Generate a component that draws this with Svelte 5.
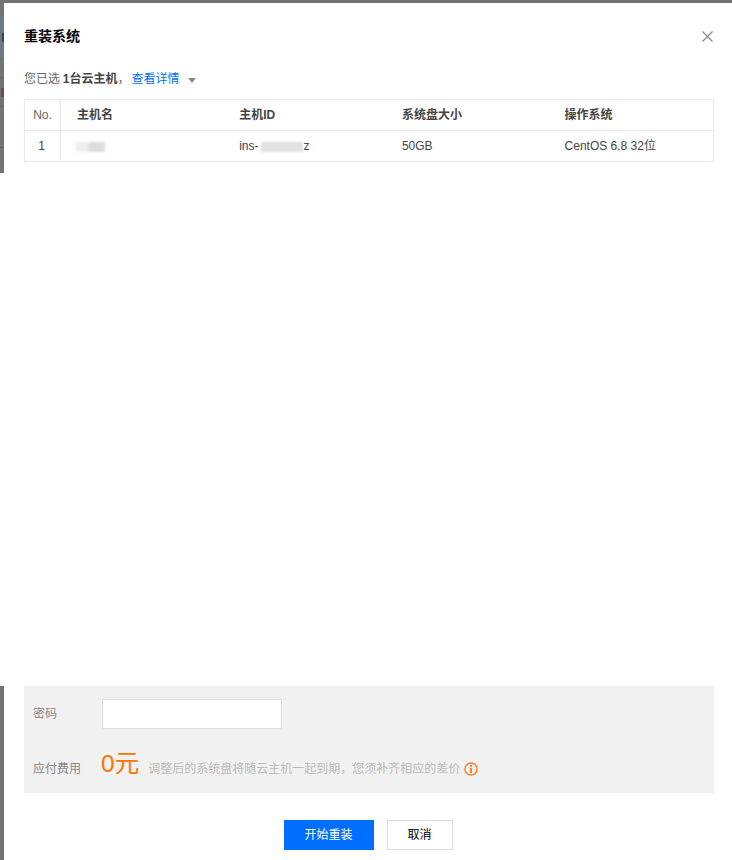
<script>
  const columns = ['主机名', '主机ID', '系统盘大小', '操作系统'];
</script>

<div class="backdrop">
  <div class="strip top"></div>
  <div class="strip side-a">
    <span class="mark m1"></span><span class="mark glyph"></span><span class="mark m2"></span><span class="mark tint"></span><span class="mark m3"></span><span class="mark m4"></span>
  </div>
  <div class="strip side-b"></div>
</div>

<main class="modal">
  <header class="head">
    <h1>重装系统</h1>
    <svg class="close" viewBox="0 0 11 11" width="11" height="11" aria-label="关闭"><path d="M.5.5l10 10M10.5.5l-10 10" /></svg>
  </header>

  <p class="summary">
    <span>您已选 <b>1台云主机</b>，</span><a href="#detail">查看详情</a><i class="caret"></i>
  </p>

  <table>
    <thead>
      <tr>
        <th class="no">No.</th>
        {#each columns as c}<th>{c}</th>{/each}
      </tr>
    </thead>
    <tbody>
      <tr>
        <td class="no">1</td>
        <td><span class="blur b1"></span></td>
        <td>ins-<span class="blur b2"></span>z</td>
        <td>50GB</td>
        <td>CentOS 6.8 32位</td>
      </tr>
    </tbody>
  </table>

  <div class="spacer"></div>

  <section class="form">
    <div class="row pw">
      <span class="label">密码</span>
      <input type="password" aria-label="密码" />
    </div>
    <div class="row fee">
      <span class="label">应付费用</span>
      <span class="price">0元</span>
      <span class="hint">调整后的系统盘将随云主机一起到期，您须补齐相应的差价</span>
      <svg class="info" viewBox="0 0 14 14" width="14" height="14" aria-hidden="true">
        <circle cx="7" cy="7" r="6.1" />
        <rect x="6" y="2.8" width="2" height="2" />
        <rect x="6" y="5.8" width="2" height="5.4" />
      </svg>
    </div>
  </section>

  <footer class="actions">
    <button class="primary">开始重装</button>
    <button class="plain">取消</button>
  </footer>
</main>

<style>
  :global(body) {
    margin: 0;
    background: #fff;
  }
  .backdrop {
    position: absolute;
    inset: 0;
    width: 732px;
    height: 860px;
    overflow: hidden;
  }
  .strip {
    position: absolute;
    background: #737373;
  }
  .top { left: 0; top: 0; width: 732px; height: 3px; }
  .side-a { left: 0; top: 0; width: 4px; height: 173px; }
  .side-b { left: 0; top: 686px; width: 4px; height: 174px; }
  .mark { position: absolute; left: 0; width: 4px; height: 1px; background: #666; }
  .m1 {
    top: 17px;
    height: 40px;
    box-sizing: border-box;
    background: #6e7880;
    border-block: 1px solid #5f7fa0;
  }
  .glyph { top: 33px; height: 9px; left: 2px; width: 2px; background: #444; }
  .tint { top: 88px; height: 9px; left: 1px; width: 3px; background: #6a4a6a; }
  .m2 { top: 77px; }
  .m3 { top: 106px; }
  .m4 { top: 147px; }

  .modal {
    position: relative;
    box-sizing: border-box;
    width: 728px;
    height: 857px;
    margin: 3px 0 0 4px;
    padding: 0 18px 0 20px;
    background: #fff;
    display: flex;
    flex-direction: column;
    font: 12px/18px "Liberation Sans", "Noto Sans CJK SC", sans-serif;
    color: #444;
  }
  .head {
    display: flex;
    justify-content: space-between;
    align-items: center;
    height: 20px;
    margin-top: 23px;
  }
  h1 {
    margin: 0;
    font-size: 14px;
    line-height: 20px;
    font-weight: 700;
    color: #000;
  }
  .close {
    margin-right: 1px;
    margin-top: 1px;
  }
  .close path {
    fill: none;
    stroke: #888;
    stroke-width: 1.2;
  }
  .summary {
    display: flex;
    align-items: center;
    height: 18px;
    margin: 24px 0 0;
    color: #666;
  }
  .summary b { color: #444; margin-left: -0.5px; }
  .summary a {
    margin-left: 2px;
    color: #006eff;
    text-decoration: none;
  }
  .caret {
    width: 0;
    height: 0;
    margin: 2px 0 0 8px;
    border-style: solid;
    border-width: 5px 4px 0;
    border-color: #888 transparent transparent;
  }
  table {
    width: 690px;
    margin-top: 11px;
    border-collapse: collapse;
    table-layout: fixed;
    border: 1px solid #e5e8ee;
    color: #444;
  }
  th, td {
    height: 31px;
    padding: 0 0 0 16px;
    text-align: left;
    font-weight: 700;
    white-space: nowrap;
    box-sizing: border-box;
  }
  th:nth-child(2), td:nth-child(2),
  th:nth-child(3), td:nth-child(3),
  th:nth-child(4), td:nth-child(4) { width: 162.7px; }
  td { font-weight: 400; }
  tbody tr { border-top: 1px solid #e5e8ee; }
  .no {
    width: 36px;
    padding: 0;
    text-align: center;
    border-right: 1px solid #e5e8ee;
    font-weight: 400;
    color: #666;
  }
  td.no { color: #444; padding-right: 2px; }
  .blur {
    display: inline-block;
    vertical-align: middle;
    height: 10px;
    filter: blur(1px);
  }
  .b1 {
    width: 29px;
    margin-left: -1px;
    background: linear-gradient(90deg, #eeeeee, #eeeeee 40%, #dcdcdc 50%, #dfdfdf);
  }
  .b2 { width: 42px; margin: 0 1px 0 2px; background: #e2e0e0; }

  .spacer { flex: 1; }

  .form {
    width: 690px;
    height: 107px;
    box-sizing: border-box;
    padding: 13px 9px 0;
    background: #f1f1f1;
  }
  .row {
    display: flex;
    align-items: center;
  }
  .label {
    width: 69px;
    flex: none;
    color: #888;
  }
  input {
    box-sizing: border-box;
    width: 180px;
    height: 30px;
    padding: 0 8px;
    border: 1px solid #ddd;
    background: #fff;
    outline: none;
  }
  .fee {
    margin-top: 18px;
    height: 36px;
  }
  .fee .label { margin-top: 7px; }
  .price {
    margin: -2px 0 0 -1px;
    font-size: 24.5px;
    line-height: 36px;
    color: #ff7200;
  }
  .hint {
    margin: 7px 0 0 9px;
    color: #bbb;
  }
  .info {
    margin: 7px 0 0 4px;
  }
  .info circle {
    fill: none;
    stroke: #ff7f2a;
    stroke-width: 1.5;
  }
  .info rect { fill: #ff7f2a; }

  .actions {
    display: flex;
    justify-content: center;
    gap: 13px;
    width: 688px;
    margin: 27px 0 10px;
  }
  button {
    box-sizing: border-box;
    height: 30px;
    padding: 0;
    font: inherit;
    cursor: pointer;
  }
  .primary {
    width: 90px;
    border: 0;
    background: #006eff;
    color: #fff;
  }
  .plain {
    width: 66px;
    border: 1px solid #ddd;
    background: #fff;
    color: #000;
  }
</style>
